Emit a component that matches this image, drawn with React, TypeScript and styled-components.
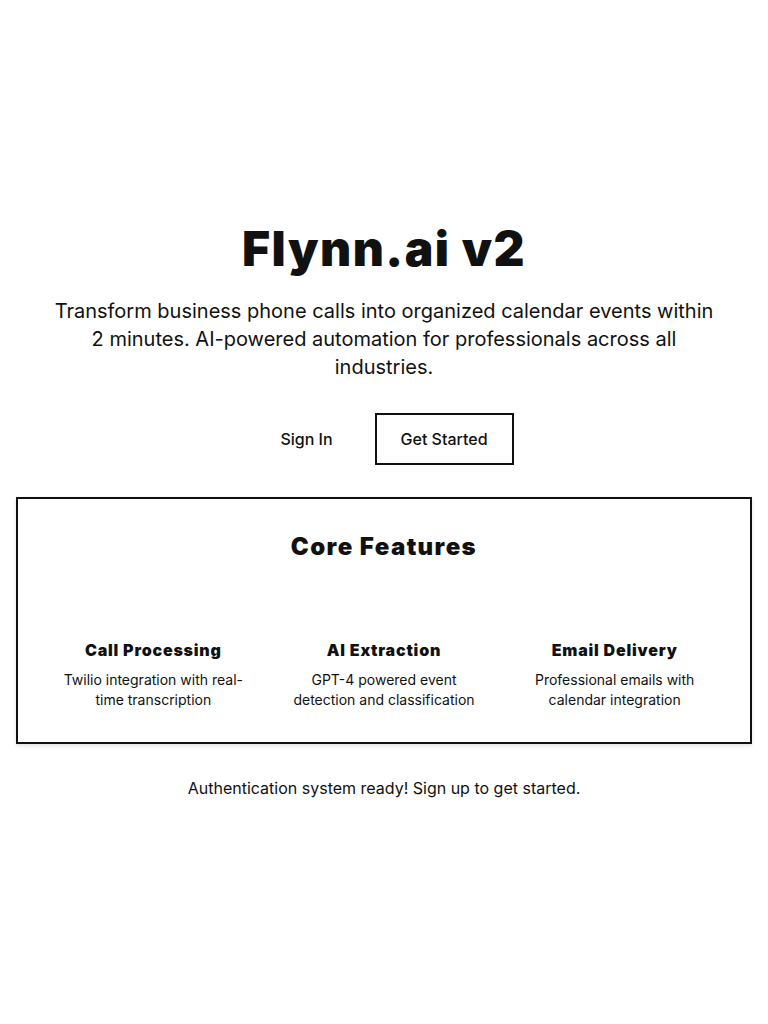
import * as React from 'react';
import styled, { createGlobalStyle } from 'styled-components';

const GlobalStyle = createGlobalStyle`
  * { box-sizing: border-box; }
  body {
    margin: 0;
    background: #fff;
    color: #111;
    font-family: Inter, "Liberation Sans", sans-serif;
  }
`;

const heavy = `"Inter", "DejaVu Sans", sans-serif`;

const Page = styled.main`
  min-height: 100vh;
  padding: 0 16px;
  display: flex;
  flex-direction: column;
  align-items: center;
  justify-content: center;
  text-align: center;
`;

const Title = styled.h1`
  margin: 0 0 24px;
  font-family: ${heavy};
  font-weight: 900;
  font-size: 48px;
  line-height: 48px;
  letter-spacing: 1.5px;
  color: #111;
`;

const Lead = styled.p`
  margin: 0 0 32px;
  max-width: 672px;
  font-size: 20px;
  line-height: 28px;
  color: #111;
`;

const Actions = styled.div`
  display: flex;
  gap: 16px;
  margin-bottom: 32px;
`;

const Button = styled.button<{ outlined?: boolean }>`
  font-family: Inter, sans-serif;
  font-size: 16px;
  font-weight: 500;
  line-height: 24px;
  padding: 12px 24px;
  background: #fff;
  color: #111;
  border: 2px solid ${p => (p.outlined ? '#111' : 'transparent')};
  cursor: pointer;
`;

const Card = styled.section`
  width: 100%;
  border: 2px solid #111;
  padding: 32px;
  box-shadow: 0 2px 4px rgba(0, 0, 0, 0.12);
`;

const CardTitle = styled.h2`
  margin: 0 0 75px;
  font-family: ${heavy};
  font-weight: 900;
  font-size: 24px;
  line-height: 32px;
  letter-spacing: 1.4px;
`;

const Features = styled.div`
  display: grid;
  grid-template-columns: repeat(3, 1fr);
  gap: 24px;
`;

const Feature = styled.div`
  display: flex;
  flex-direction: column;
  gap: 8px;
`;

const FeatureTitle = styled.h3`
  margin: 0;
  font-family: ${heavy};
  font-weight: 900;
  font-size: 16px;
  line-height: 24px;
  letter-spacing: 0.8px;
`;

const FeatureText = styled.p`
  margin: 0;
  font-size: 14px;
  line-height: 20px;
`;

const Status = styled.p`
  margin: 32px 0 0;
  font-size: 16px;
  line-height: 24px;
`;

const features = [
  { title: 'Call Processing', text: 'Twilio integration with real-time transcription' },
  { title: 'AI Extraction', text: 'GPT-4 powered event detection and classification' },
  { title: 'Email Delivery', text: 'Professional emails with calendar integration' }
];

export default function App() {
  return (
    <>
      <GlobalStyle />
      <Page>
        <Title>Flynn.ai v2</Title>
        <Lead>
          Transform business phone calls into organized calendar events within 2 minutes. AI-powered
          automation for professionals across all industries.
        </Lead>
        <Actions>
          <Button>Sign In</Button>
          <Button outlined>Get Started</Button>
        </Actions>
        <Card>
          <CardTitle>Core Features</CardTitle>
          <Features>
            {features.map(f => (
              <Feature key={f.title}>
                <FeatureTitle>{f.title}</FeatureTitle>
                <FeatureText>{f.text}</FeatureText>
              </Feature>
            ))}
          </Features>
        </Card>
        <Status>Authentication system ready! Sign up to get started.</Status>
      </Page>
    </>
  );
}
